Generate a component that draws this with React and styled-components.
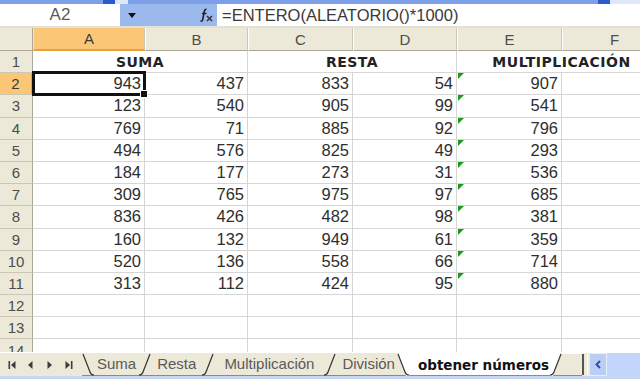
import React from "react";
import styled, { createGlobalStyle, css } from "styled-components";

const GlobalStyle = createGlobalStyle`
  html, body {
    margin: 0;
    padding: 0;
    overflow: hidden;
    background: #ece9d8;
  }
  * { box-sizing: border-box; }
`;

const Window = styled.div`
  width: 640px;
  height: 379px;
  display: flex;
  flex-direction: column;
  overflow: hidden;
  font-family: "Liberation Sans", Arial, sans-serif;
  background: #ece9d8;
`;

const TopStrip = styled.div`
  height: 4px;
  display: flex;
  background: #dfe8f8;
`;

const StripPart = styled.div`
  width: ${(p) => p.$w}px;
  background: ${(p) => (p.$light ? "#dfe8f8" : "#7c9fe8")};
  border-right: ${(p) => (p.$light ? "none" : "12px solid #2d5cc8")};
`;

const FormulaBar = styled.div`
  height: 22px;
  display: flex;
  background: #9cb9ee;
`;

const NameBox = styled.div`
  width: 120px;
  background: #fff;
  color: #5a5a5a;
  font-size: 17px;
  display: flex;
  align-items: center;
  justify-content: center;
`;

const DropButton = styled.div`
  width: 23px;
  display: flex;
  align-items: center;
  justify-content: center;
`;

const FxBox = styled.div`
  width: 74px;
  display: flex;
  align-items: center;
  justify-content: flex-end;
  padding-right: 4px;
`;

const FormulaText = styled.div`
  flex: 1;
  background: #fff;
  color: #3a3a3a;
  font-size: 16.5px;
  padding-left: 5px;
  display: flex;
  align-items: center;
  white-space: nowrap;
`;

const Gap = styled.div`
  height: 2px;
  background: #e4e2d6;
`;

const Sheet = styled.div`
  height: 324px;
  flex: none;
  overflow: hidden;
  display: grid;
  grid-template-columns: 33px 112px 103px 105px 104px 105px 105px;
  grid-template-rows: 23px;
  grid-auto-rows: 22.2px;
  background: #fff;
  width: 667px;
`;

const orange = css`
  background: #fbc777;
  color: #3a3a3a;
`;

const Corner = styled.div`
  background: #ece9d8;
  border-right: 1px solid #aca899;
  border-bottom: 1px solid #aca899;
`;

const ColHead = styled.div`
  background: #ece9d8;
  color: #4d4d4d;
  font-size: 15px;
  display: flex;
  align-items: center;
  justify-content: center;
  border-left: 1px solid #fff;
  border-right: 1px solid #cbc7b8;
  border-bottom: 1px solid #aca899;
  ${(p) =>
    p.$active &&
    css`
      ${orange};
      border-left-color: #fde2b4;
      border-bottom: 2px solid #e9a13d;
    `}
`;

const RowHead = styled.div`
  background: #ece9d8;
  color: #4d4d4d;
  font-size: 15px;
  display: flex;
  align-items: center;
  justify-content: center;
  border-right: 1px solid #aca899;
  border-bottom: 1px solid #cbc7b8;
  ${(p) =>
    p.$active &&
    css`
      ${orange};
      border-right: 2px solid #e9a13d;
    `}
`;

const Cell = styled.div`
  position: relative;
  grid-column: span ${(p) => p.$span || 1};
  border-right: 1px solid #d6d6d6;
  border-bottom: 1px solid #d6d6d6;
  color: #2e2e2e;
  font-size: 16.5px;
  display: flex;
  align-items: center;
  justify-content: ${(p) => (p.$title ? "center" : "flex-end")};
  padding-right: 3px;
  ${(p) =>
    p.$title &&
    css`
      font-family: "DejaVu Sans", Verdana, sans-serif;
      font-weight: bold;
      font-size: 14px;
      letter-spacing: 0.5px;
      color: #222;
      padding-right: 0;
      padding-top: 1px;
    `}
  ${(p) =>
    p.$flag &&
    css`
      &::before {
        content: "";
        position: absolute;
        left: 1px;
        top: 0;
        border-top: 6px solid #1a9a1a;
        border-right: 6px solid transparent;
      }
    `}
  ${(p) =>
    p.$selected &&
    css`
      &::after {
        content: "";
        position: absolute;
        left: -1px;
        top: -2px;
        right: -2px;
        bottom: -2px;
        border: 3px solid #111;
      }
      &::before {
        content: "";
        position: absolute;
        right: -4px;
        bottom: -4px;
        width: 6px;
        height: 6px;
        background: #111;
        border: 1px solid #fff;
        z-index: 2;
      }
    `}
`;

const TabBar = styled.div`
  height: 24px;
  flex: none;
  display: flex;
  align-items: stretch;
  background: #ece9d8;
  border-top: 1px solid #fff;
`;

const NavButtons = styled.div`
  width: 82px;
  display: flex;
  align-items: center;
  justify-content: space-around;
  padding: 0 4px 0 2px;
`;

const Tabs = styled.div`
  display: flex;
  align-items: stretch;
  border-bottom: 1px solid #8a8a8a;
  width: 500px;
`;

const Tab = styled.div`
  display: flex;
  align-items: center;
  padding: 0 ${(p) => p.$pr}px 1px ${(p) => p.$pl}px;
  font-size: 15px;
  color: #5a5a5a;
  white-space: nowrap;
  ${(p) =>
    p.$active &&
    css`
      background: #fff;
      color: #111;
      font-family: "DejaVu Sans", Verdana, sans-serif;
      font-weight: bold;
      font-size: 13.5px;
      padding-top: 2px;
    `}
`;

const TabRest = styled.div`
  flex: 1;
  border-top: 1px solid #fff;
`;

const Splitter = styled.div`
  width: 6px;
  border-left: 2px solid #555;
  border-right: 1px solid #fff;
  margin: 1px 0;
`;

const ScrollButton = styled.div`
  width: 18px;
  margin-left: 1px;
  background: #b9cdf5;
  border: 1px solid #e8effc;
  color: #2a4aa8;
  display: flex;
  align-items: center;
  justify-content: center;
`;

const ScrollTrack = styled.div`
  flex: 1;
  background: #c4d5fb;
`;

const BottomStrip = styled.div`
  height: 3px;
  flex: none;
  background: #c9d6f2;
`;

const NavIcon = ({ kind }) => {
  const shapes = {
    first: (
      <>
        <rect x="0" y="0" width="1.6" height="8" />
        <path d="M7 0 L2.5 4 L7 8 Z" />
      </>
    ),
    prev: <path d="M5 0 L0.5 4 L5 8 Z" />,
    next: <path d="M1 0 L5.5 4 L1 8 Z" />,
    last: (
      <>
        <path d="M0 0 L4.5 4 L0 8 Z" />
        <rect x="5.4" y="0" width="1.6" height="8" />
      </>
    ),
  };
  return (
    <svg width="8" height="8" viewBox="0 0 7 8" fill="#3c3c3c">
      {shapes[kind]}
    </svg>
  );
};

// slanted tab edge; "back" = "\" , otherwise "/"
const Slant = ({ back, fillSide }) => (
  <svg width="12" height="23" viewBox="0 0 12 23" style={{ flex: "none" }}>
    {fillSide === "right" && <path d="M1 0 L12 0 L12 23 L9 23 Z" fill="#fff" />}
    {fillSide === "left" && <path d="M0 0 L11 0 L3 23 L0 23 Z" fill="#fff" />}
    {back ? (
      <path d="M1 1 L8 19 Q9 22 12 22" stroke="#333" strokeWidth="1.2" fill="none" />
    ) : (
      <path d="M0 22 Q3 22 4 19 L11 1" stroke="#333" strokeWidth="1.2" fill="none" />
    )}
  </svg>
);

const cols = ["A", "B", "C", "D", "E", "F"];

const data = [
  [943, 437, 833, 54, 907],
  [123, 540, 905, 99, 541],
  [769, 71, 885, 92, 796],
  [494, 576, 825, 49, 293],
  [184, 177, 273, 31, 536],
  [309, 765, 975, 97, 685],
  [836, 426, 482, 98, 381],
  [160, 132, 949, 61, 359],
  [520, 136, 558, 66, 714],
  [313, 112, 424, 95, 880],
];

export default function App() {
  return (
    <Window>
      <GlobalStyle />
      <TopStrip>
        <StripPart $w={115} />
        <StripPart $w={13} $light />
        <StripPart $w={482} />
      </TopStrip>

      <FormulaBar>
        <NameBox>A2</NameBox>
        <DropButton>
          <svg width="8" height="5" viewBox="0 0 8 5">
            <path d="M0 0 L8 0 L4 5 Z" fill="#111" />
          </svg>
        </DropButton>
        <FxBox>
          <svg width="14" height="14" viewBox="0 0 14 14">
            <path
              d="M7.5 1.5 Q6 1 5.4 3 L3.6 12 Q3 13.5 1.5 12.8"
              stroke="#222"
              strokeWidth="1.6"
              fill="none"
            />
            <path d="M3 5.5 L7.5 5.5" stroke="#222" strokeWidth="1.4" />
            <path d="M8 8 L13 13 M13 8 L8 13" stroke="#333" strokeWidth="1.5" />
          </svg>
        </FxBox>
        <FormulaText>=ENTERO(ALEATORIO()*1000)</FormulaText>
      </FormulaBar>

      <Gap />

      <Sheet>
        <Corner />
        {cols.map((c) => (
          <ColHead key={c} $active={c === "A"}>
            {c}
          </ColHead>
        ))}

        <RowHead>1</RowHead>
        <Cell $span={2} $title>
          SUMA
        </Cell>
        <Cell $span={2} $title>
          RESTA
        </Cell>
        <Cell $span={2} $title>
          MULTIPLICACIÓN
        </Cell>

        {data.map((row, i) => (
          <React.Fragment key={i}>
            <RowHead $active={i === 0}>{i + 2}</RowHead>
            {row.map((v, j) => (
              <Cell key={j} $selected={i === 0 && j === 0} $flag={j === 4}>
                {v}
              </Cell>
            ))}
            <Cell />
          </React.Fragment>
        ))}

        {[12, 13, 14].map((n) => (
          <React.Fragment key={n}>
            <RowHead>{n}</RowHead>
            {cols.map((c) => (
              <Cell key={c} />
            ))}
          </React.Fragment>
        ))}
      </Sheet>

      <TabBar>
        <NavButtons>
          <NavIcon kind="first" />
          <NavIcon kind="prev" />
          <NavIcon kind="next" />
          <NavIcon kind="last" />
        </NavButtons>
        <Tabs>
          <Slant back />
          <Tab $pl={3} $pr={3}>Suma</Tab>
          <Slant />
          <Tab $pl={6} $pr={6}>Resta</Tab>
          <Slant />
          <Tab $pl={10} $pr={10}>Multiplicación</Tab>
          <Slant />
          <Tab $pl={6} $pr={2}>División</Tab>
          <Slant back fillSide="right" />
          <Tab $active $pl={9} $pr={1}>
            obtener números
          </Tab>
          <Slant fillSide="left" />
          <TabRest />
        </Tabs>
        <Splitter />
        <ScrollButton>
          <svg width="6" height="9" viewBox="0 0 6 9">
            <path d="M5 1 L1.5 4.5 L5 8" stroke="#2a4aa8" strokeWidth="1.8" fill="none" />
          </svg>
        </ScrollButton>
        <ScrollTrack />
      </TabBar>
      <BottomStrip />
    </Window>
  );
}
